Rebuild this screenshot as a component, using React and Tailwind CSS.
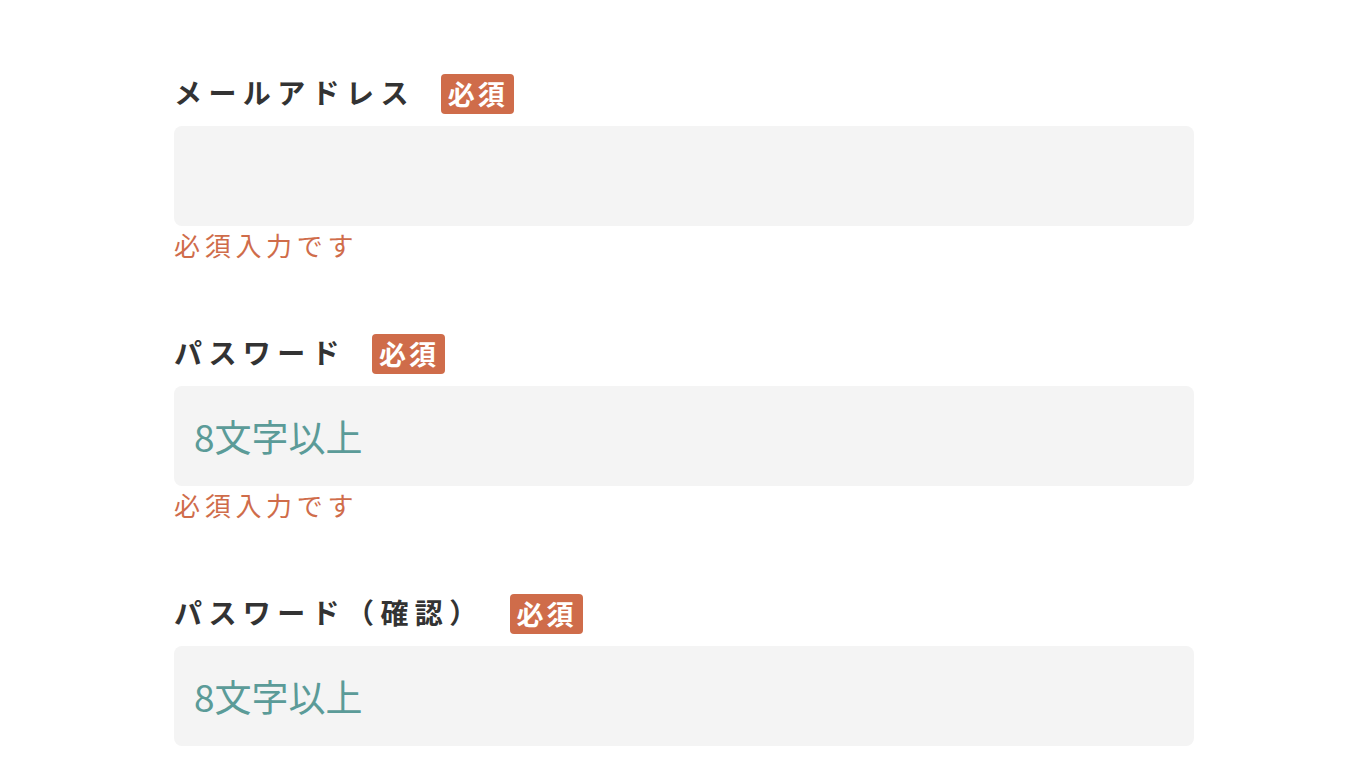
const fontStack = { fontFamily: '"Noto Sans CJK JP", "Noto Sans", sans-serif' };

const RequiredBadge = () => (
  <span className="ml-[26px] inline-flex h-10 items-center rounded-[4px] bg-[#cf6c4a] pl-[7px] pr-[6px] text-[27px] font-bold tracking-[3px] text-white">
    必須
  </span>
);

const Field = ({ label, placeholder, error, type = 'text' }) => (
  <div className="flex flex-col">
    <div className="flex h-10 items-center">
      <span className="-mt-1 text-[28px] font-bold tracking-[6.4px] text-[#333333]">{label}</span>
      <RequiredBadge />
    </div>
    <input
      type={type}
      placeholder={placeholder}
      className="mt-3 h-[100px] w-full rounded-lg bg-[#f4f4f4] px-5 text-[37px] text-[#333] outline-none placeholder:text-[#5b9b98]"
    />
    {error && (
      <p className="mt-1 h-[30px] text-[26px] leading-[30px] tracking-[4.7px] text-[#cf6c4a]">{error}</p>
    )}
  </div>
);

export default function App() {
  return (
    <div className="min-h-screen bg-white" style={fontStack}>
      <form className="ml-[174px] flex w-[1020px] flex-col gap-[74px] pt-[74px]">
        <Field label="メールアドレス" error="必須入力です" />
        <Field label="パスワード" placeholder="8文字以上" error="必須入力です" type="password" />
        <Field label="パスワード（確認）" placeholder="8文字以上" type="password" />
      </form>
    </div>
  );
}
